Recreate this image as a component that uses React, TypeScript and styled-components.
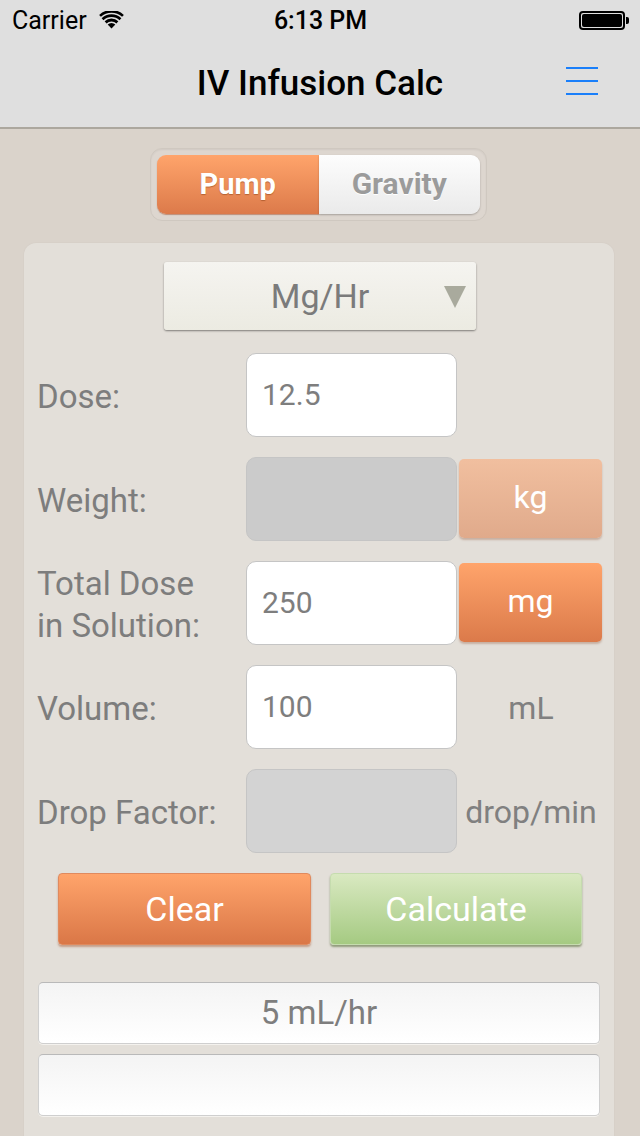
import React from "react";
import styled, { createGlobalStyle } from "styled-components";

const Global = createGlobalStyle`
  html, body { margin: 0; padding: 0; }
  body { font-family: Roboto, "Liberation Sans", Arial, sans-serif; background: #d9d2ca; }
  #root { width: 640px; height: 1136px; overflow: hidden; }
`;

const Screen = styled.div`
  width: 640px;
  height: 1136px;
  background: #dad3cb;
  display: flex;
  flex-direction: column;
  overflow: hidden;
`;

const Header = styled.div`
  background: #dfdfdf;
  border-bottom: 2px solid #aca79e;
`;

const StatusBar = styled.div`
  height: 40px;
  display: grid;
  grid-template-columns: 1fr auto 1fr;
  align-items: center;
  padding: 0 11px 0 12px;
  font-size: 25px;
  color: #000;
`;

const Carrier = styled.div`
  display: flex;
  align-items: center;
  gap: 12px;
`;

const Time = styled.div`
  font-weight: 500;
  font-size: 25px;
`;

const BatteryWrap = styled.div`
  justify-self: end;
  display: flex;
  align-items: center;
`;

const BatteryBody = styled.div`
  width: 40px;
  height: 13px;
  border: 2px solid #000;
  border-radius: 4px;
  padding: 1px;
  box-sizing: content-box;
  display: flex;
`;

const BatteryFill = styled.div`
  flex: 1;
  background: #000;
  border-radius: 2px;
`;

const BatteryTip = styled.div`
  width: 3px;
  height: 7px;
  background: #000;
  border-radius: 0 2px 2px 0;
  margin-left: 1px;
`;

const NavBar = styled.div`
  height: 87px;
  display: flex;
  align-items: center;
  justify-content: center;
  position: relative;
`;

const Title = styled.div`
  font-size: 35px;
  font-weight: 500;
  color: #000;
  margin-bottom: 1px;
`;

const MenuButton = styled.div`
  position: absolute;
  right: 42px;
  top: 27px;
  width: 32px;
  height: 28px;
  display: flex;
  flex-direction: column;
  justify-content: space-between;
`;

const MenuLine = styled.div`
  height: 2px;
  background: #1a7ffa;
`;

const Content = styled.div`
  display: flex;
  flex-direction: column;
  padding-top: 19px;
`;

const SegmentOuter = styled.div`
  width: 323px;
  margin-left: 150px;
  padding: 6px;
  border-radius: 12px;
  background: #ddd6cf;
  border: 1px solid #cfc8c0;
  box-shadow: inset 0 1px 2px rgba(0, 0, 0, 0.06);
  display: flex;
`;

const Segment = styled.div<{ $active?: boolean }>`
  flex: 1;
  height: 59px;
  display: flex;
  align-items: center;
  justify-content: center;
  font-size: ${(p) => (p.$active ? "29px" : "30px")};
  font-weight: 700;
  color: ${(p) => (p.$active ? "#fff" : "#9b9b9b")};
  text-shadow: ${(p) => (p.$active ? "0 1px 1px rgba(120,50,10,0.45)" : "0 1px 0 #fff")};
  background: ${(p) =>
    p.$active
      ? "linear-gradient(#ffa46b, #dc7a4a)"
      : "linear-gradient(#fdfdfd, #eaeaea)"};
  border-radius: ${(p) => (p.$active ? "9px 0 0 9px" : "0 9px 9px 0")};
  box-shadow: ${(p) =>
    p.$active ? "0 1px 1px rgba(160,70,30,0.5)" : "0 1px 2px rgba(0,0,0,0.25)"};
  padding-bottom: 2px;
  box-sizing: border-box;
`;

const Card = styled.div`
  margin-top: 22px;
  width: 590px;
  margin-left: 24px;
  background: #e3dfd9;
  border-radius: 12px;
  padding: 19px 13px 40px 13px;
  box-sizing: border-box;
  display: flex;
  flex-direction: column;
  box-shadow: 0 0 2px rgba(0, 0, 0, 0.05);
`;

const Dropdown = styled.div`
  align-self: center;
  width: 312px;
  height: 68px;
  margin-left: 2px;
  box-sizing: border-box;
  border-radius: 3px;
  background: linear-gradient(#f5f4f0, #ecebe2);
  box-shadow: 0 1px 2px rgba(0, 0, 0, 0.45);
  position: relative;
  display: flex;
  align-items: center;
  justify-content: center;
  font-size: 34px;
  color: #7b7b7b;
`;

const Arrow = styled.div`
  position: absolute;
  right: 10px;
  top: 24px;
  width: 0;
  height: 0;
  border-left: 11px solid transparent;
  border-right: 11px solid transparent;
  border-top: 22px solid #a9aa9d;
`;

const Form = styled.div`
  margin-top: 23px;
  display: grid;
  grid-template-columns: 209px 211px 145px;
  grid-auto-rows: 84px;
  row-gap: 20px;
  align-items: center;
`;

const Label = styled.div`
  font-size: 33px;
  line-height: 42px;
  color: #7d7d7d;
  padding-top: 3px;
  white-space: nowrap;
`;

const Input = styled.div<{ $disabled?: boolean; $shade?: string }>`
  height: 84px;
  box-sizing: border-box;
  border-radius: 10px;
  border: 1px solid #c5c5c5;
  background: ${(p) => (p.$disabled ? p.$shade || "#cbcbcb" : "#ffffff")};
  display: flex;
  align-items: center;
  padding: 0 15px 2px;
  font-size: 30px;
  color: #7e7e7e;
`;

const UnitButton = styled.div<{ $light?: boolean }>`
  margin-left: 2px;
  height: 79px;
  align-self: start;
  margin-top: 2px;
  border-radius: 5px;
  background: ${(p) =>
    p.$light
      ? "linear-gradient(#f1bf9f, #e0aa8b)"
      : "linear-gradient(#ffa46b, #db7a4a)"};
  box-shadow: 0 2px 2px rgba(150, 90, 60, 0.35);
  display: flex;
  align-items: center;
  justify-content: center;
  color: #fff;
  font-size: 32px;
  padding-bottom: 3px;
  box-sizing: border-box;
`;

const UnitText = styled.div`
  text-align: center;
  font-size: 32px;
  color: #808080;
  padding-left: 3px;
  padding-top: 2px;
  white-space: nowrap;
`;

const ActionRow = styled.div`
  margin-top: 20px;
  display: grid;
  grid-template-columns: 253px 252px;
  column-gap: 19px;
  padding-left: 21px;
`;

const ActionButton = styled.div<{ $variant: "orange" | "green" }>`
  height: 72px;
  border-radius: 4px;
  background: ${(p) =>
    p.$variant === "orange"
      ? "linear-gradient(#ffa46b, #da7747)"
      : "linear-gradient(#d9e9c1, #a5ca82)"};
  border: 1px solid ${(p) => (p.$variant === "orange" ? "#e08a5e" : "#c5dcae")};
  box-shadow: 0 2px 2px
    ${(p) => (p.$variant === "orange" ? "rgba(160,80,40,0.45)" : "rgba(90,110,60,0.6)")};
  display: flex;
  align-items: center;
  justify-content: center;
  color: #fff;
  font-size: 34px;
  padding-bottom: 1px;
  box-sizing: border-box;
`;

const Results = styled.div`
  margin-top: 37px;
  display: flex;
  flex-direction: column;
  gap: 10px;
  padding-left: 1px;
`;

const ResultBox = styled.div`
  width: 562px;
  height: 62px;
  box-sizing: border-box;
  border-radius: 5px;
  border: 1px solid #cfcfcf;
  border-top-color: #b9b9b9;
  background: linear-gradient(#f4f4f4, #ffffff);
  box-shadow: 0 1px 0 #f4f2ee;
  display: flex;
  align-items: center;
  justify-content: center;
  font-size: 33px;
  color: #7e7e7e;
  padding-bottom: 2px;
`;

const Wifi = () => (
  <svg width="25" height="18" viewBox="0 0 22 16">
    <path d="M11 15.5 L7.6 11.9 A5 5 0 0 1 14.4 11.9 Z" fill="#000" />
    <path d="M4.9 9.2 A8.8 8.8 0 0 1 17.1 9.2 L15.4 11 A6.4 6.4 0 0 0 6.6 11 Z" fill="#000" />
    <path d="M2.2 6.4 A12.6 12.6 0 0 1 19.8 6.4 L18.1 8.2 A10.2 10.2 0 0 0 3.9 8.2 Z" fill="#000" />
    <path d="M0 3.7 A16 16 0 0 1 22 3.7 L20.4 5.4 A13.7 13.7 0 0 0 1.6 5.4 Z" fill="#000" transform="translate(0,-0.2)" />
  </svg>
);

export default function App() {
  return (
    <>
      <Global />
      <Screen>
        <Header>
          <StatusBar>
            <Carrier>
              Carrier <Wifi />
            </Carrier>
            <Time>6:13 PM</Time>
            <BatteryWrap>
              <BatteryBody>
                <BatteryFill />
              </BatteryBody>
              <BatteryTip />
            </BatteryWrap>
          </StatusBar>
          <NavBar>
            <Title>IV Infusion Calc</Title>
            <MenuButton>
              <MenuLine />
              <MenuLine />
              <MenuLine />
            </MenuButton>
          </NavBar>
        </Header>
        <Content>
          <SegmentOuter>
            <Segment $active>Pump</Segment>
            <Segment>Gravity</Segment>
          </SegmentOuter>
          <Card>
            <Dropdown>
              Mg/Hr
              <Arrow />
            </Dropdown>
            <Form>
              <Label>Dose:</Label>
              <Input>12.5</Input>
              <div />

              <Label>Weight:</Label>
              <Input $disabled $shade="#cbcbcb" />
              <UnitButton $light>kg</UnitButton>

              <Label>
                Total Dose
                <br />
                in Solution:
              </Label>
              <Input>250</Input>
              <UnitButton>mg</UnitButton>

              <Label>Volume:</Label>
              <Input>100</Input>
              <UnitText>mL</UnitText>

              <Label>Drop Factor:</Label>
              <Input $disabled $shade="#d3d3d3" />
              <UnitText>drop/min</UnitText>
            </Form>
            <ActionRow>
              <ActionButton $variant="orange">Clear</ActionButton>
              <ActionButton $variant="green">Calculate</ActionButton>
            </ActionRow>
            <Results>
              <ResultBox>5 mL/hr</ResultBox>
              <ResultBox />
            </Results>
          </Card>
        </Content>
      </Screen>
    </>
  );
}
